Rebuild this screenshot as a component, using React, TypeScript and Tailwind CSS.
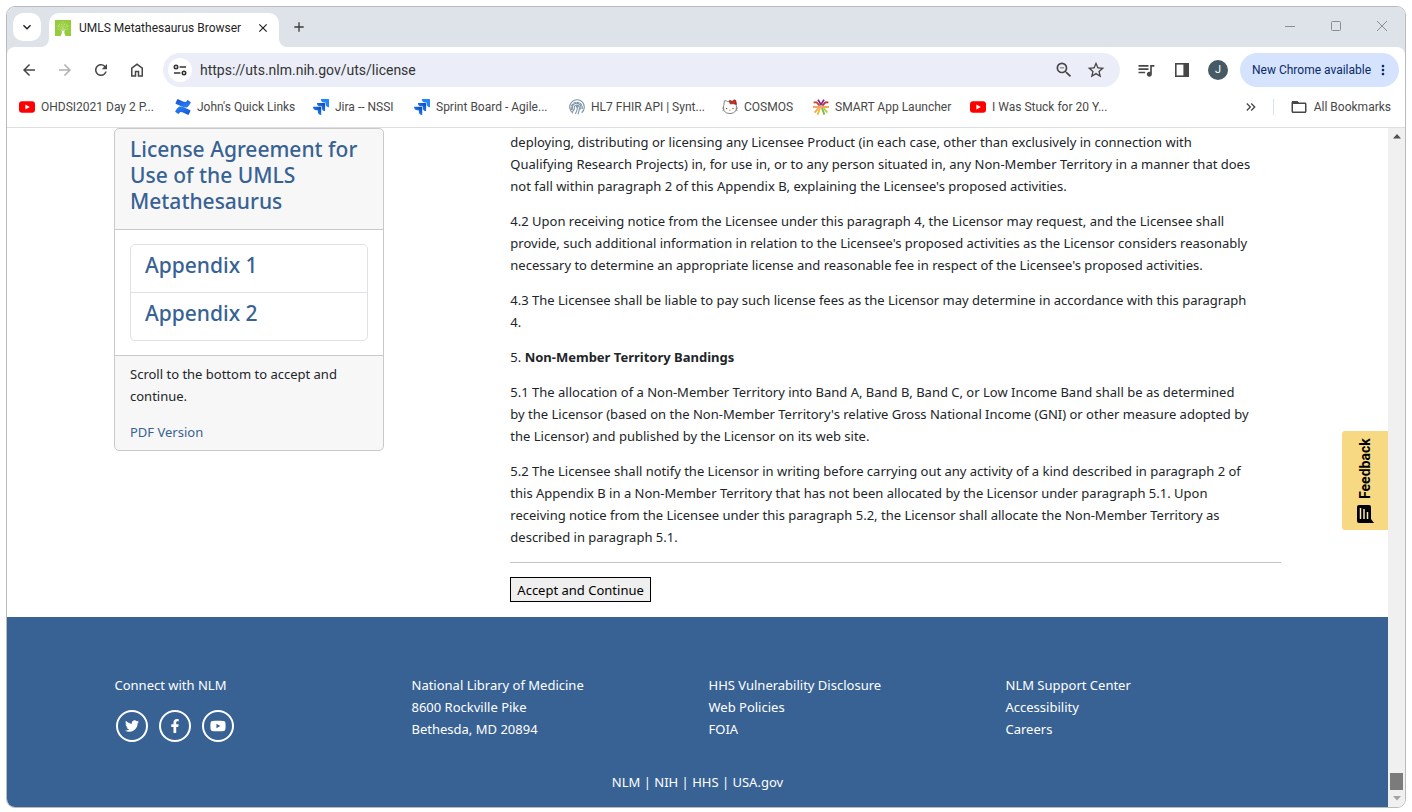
import React from "react";
import {
  MdArrowBack,
  MdArrowForward,
  MdRefresh,
  MdZoomOut,
  MdStarOutline,
  MdQueueMusic,
  MdFolderOpen,
  MdMoreVert,
  MdClose,
  MdAdd,
  MdKeyboardArrowDown,
  MdKeyboardDoubleArrowRight,
} from "react-icons/md";
import { FaTwitter, FaFacebookF, FaYoutube } from "react-icons/fa";

function YouTubeMark() {
  return (
    <svg viewBox="0 0 16 16" className="size-4" aria-hidden="true">
      <rect x="0" y="2.3" width="16" height="11.4" rx="3" fill="#ff0000" />
      <path d="M6.4 5.4 L10.8 8 L6.4 10.6 Z" fill="#fff" />
    </svg>
  );
}

function ConfluenceMark() {
  return (
    <svg viewBox="0 0 16 16" className="size-4" aria-hidden="true">
      <defs>
        <linearGradient id="cf-a" x1="1" y1="1" x2="0.2" y2="0">
          <stop offset="0" stopColor="#1a50c8" />
          <stop offset="1" stopColor="#2684ff" />
        </linearGradient>
        <linearGradient id="cf-b" x1="0" y1="0" x2="0.8" y2="1">
          <stop offset="0" stopColor="#1a50c8" />
          <stop offset="1" stopColor="#2684ff" />
        </linearGradient>
      </defs>
      <path d="M0.4 12 L2 9.5 C3.9 6.7 6.4 7 10.3 8.9 L15 11.1 C15.5 11.3 15.6 11.6 15.4 12 L13.8 15.4 C13.6 15.8 13.2 15.9 12.8 15.7 L8.6 13.8 C6 12.6 4.9 12.6 3.9 14.6 C3.6 15 3.3 15 3 14.8 L0.5 13 C0.1 12.7 0.1 12.4 0.4 12 Z" fill="url(#cf-a)" />
      <path d="M15.6 4 L14 6.5 C12.1 9.3 9.6 9 5.7 7.1 L1 4.9 C0.5 4.7 0.4 4.4 0.6 4 L2.2 0.6 C2.4 0.2 2.8 0.1 3.2 0.3 L7.4 2.2 C10 3.4 11.1 3.4 12.1 1.4 C12.4 1 12.7 1 13 1.2 L15.5 3 C15.9 3.3 15.9 3.6 15.6 4 Z" fill="url(#cf-b)" />
    </svg>
  );
}

function JiraMark() {
  return (
    <svg viewBox="0 0 16 16" className="size-4" aria-hidden="true">
      <defs>
        <linearGradient id="jr-a" x1="1" y1="0" x2="0.3" y2="0.8">
          <stop offset="0.2" stopColor="#0f4fc0" />
          <stop offset="1" stopColor="#2684ff" />
        </linearGradient>
      </defs>
      <path d="M7.8 0 H15.4 A0.6 0.6 0 0 1 16 0.6 V8.2 A3.5 3.5 0 0 1 12.6 4.8 V3.4 H11.2 A3.5 3.5 0 0 1 7.8 0 Z" fill="#2684ff" />
      <path d="M3.9 3.9 H11.5 A0.6 0.6 0 0 1 12.1 4.5 V12.1 A3.5 3.5 0 0 1 8.7 8.7 V7.3 H7.3 A3.5 3.5 0 0 1 3.9 3.9 Z" fill="url(#jr-a)" />
      <path d="M0 7.8 H7.6 A0.6 0.6 0 0 1 8.2 8.4 V16 A3.5 3.5 0 0 1 4.8 12.6 V11.2 H3.4 A3.5 3.5 0 0 1 0 7.8 Z" fill="url(#jr-a)" />
    </svg>
  );
}

function FhirMark() {
  return (
    <svg viewBox="0 0 16 16" className="size-4" fill="none" stroke="#7d93a6" strokeWidth="1.1" aria-hidden="true">
      <path d="M4 14.2 A7.3 7.3 0 1 1 12.6 13.8" />
      <path d="M2.6 11 A5.6 5.6 0 1 1 13.2 10.2" strokeDasharray="3 0.6" />
      <path d="M4.4 11.2 A4.2 4.2 0 1 1 11.4 10.4" />
      <path d="M5.8 10.4 A2.6 2.6 0 1 1 10.4 9 M8.4 7.6 Q8.6 11 6.4 15 M10.4 9 Q10.2 12 9 15.4 M3 12.6 Q4.6 12 5.2 10.6" />
      <circle cx="8.2" cy="7.4" r="1.2" fill="#7d93a6" stroke="none" />
    </svg>
  );
}

function KittyMark() {
  return (
    <svg viewBox="0 0 16 16" className="size-4" aria-hidden="true">
      <path d="M2.4 1.8 Q4 1.2 5.4 2.6 Q8 1.9 10.6 2.8 L13.8 2.4 L14.2 6.2 Q15.4 9 14 11.6 Q11.8 14.6 8 14.6 Q3.8 14.6 1.8 11.6 Q0.8 9 1.8 6.4 Z" fill="#fff" stroke="#777" strokeWidth="0.9" />
      <path d="M7.4 1.6 Q9 1 10 2.6 Q12 0 13.6 1.2 L14.4 5.4 L11.4 4.8 L8 4.8 Z" fill="#d92b20" stroke="#5a2420" strokeWidth="0.6" />
      <circle cx="4.6" cy="9.6" r="0.7" fill="#333" />
      <circle cx="11" cy="9.6" r="0.7" fill="#333" />
      <ellipse cx="7.8" cy="11.2" rx="0.9" ry="0.6" fill="#d8b050" />
      <path d="M0 9 H2.4 M0.4 11.6 L2.6 11 M13.4 9 H16 M13.2 11 L15.6 11.6" stroke="#777" strokeWidth="0.6" />
    </svg>
  );
}

function SmartMark() {
  return (
    <svg viewBox="0 0 16 16" className="size-4" fill="none" strokeWidth="1.8" aria-hidden="true">
      <path d="M5 0.6 L8 5.6 L11 0.6" stroke="#7b2d83" />
      <path d="M0.6 3.4 H3.6 L6.6 6.6" stroke="#d0402a" />
      <path d="M15.4 3.4 H12.4 L9.4 6.6" stroke="#c0283c" />
      <path d="M0 8 H16" stroke="#f08a3c" strokeWidth="1.6" />
      <path d="M7 9 L4.6 15.6" stroke="#f5b921" />
      <path d="M5.4 9.2 L1.6 13.6" stroke="#f5a85a" />
      <path d="M9 9 L11.4 15.6" stroke="#7ab648" />
      <path d="M10.6 9.2 L14.4 13.6" stroke="#b4cf3c" />
    </svg>
  );
}

function TreeMark() {
  return (
    <svg viewBox="0 0 16 16" className="size-4" aria-hidden="true">
      <rect width="16" height="16" fill="#94cc3c" />
      <path d="M5.6 16 Q7.6 12.4 6.4 10 L8 10.8 L9.6 10 Q8.6 12.4 10.6 16 Z" fill="#fff" />
      <g stroke="#d3ea9c" strokeWidth="0.7" fill="none">
        <path d="M6.8 10 L2 8.4 M7 9.6 L3 5 M7.6 9.4 L6 2.4 M8.4 9.4 L10 2.4 M9 9.6 L13 5 M9.2 10 L14 8.4" strokeDasharray="1.6 0.7" />
        <path d="M4 7 L1.6 6 M5 6.4 L4 3 M11 6.4 L12 3 M12 7 L14.4 6 M8 8 V1.6" strokeDasharray="1 0.7" />
      </g>
    </svg>
  );
}

const bookmarks = [
  { label: "OHDSI2021 Day 2 P...", icon: <YouTubeMark />, width: "w-[156px]" },
  { label: "John's Quick Links", icon: <ConfluenceMark />, width: "w-[138px]" },
  { label: "Jira -- NSSI", icon: <JiraMark />, width: "w-[101px]" },
  { label: "Sprint Board - Agile...", icon: <JiraMark />, width: "w-[155px]" },
  { label: "HL7 FHIR API | Synt...", icon: <FhirMark />, width: "w-[153px]" },
  { label: "COSMOS", icon: <KittyMark />, width: "w-[91px]" },
  { label: "SMART App Launcher", icon: <SmartMark />, width: "w-[157px]" },
  { label: "I Was Stuck for 20 Y...", icon: <YouTubeMark />, width: "w-[156px]" },
];

const paragraphs: { lines: React.ReactNode[] }[] = [
  {
    lines: [
      "deploying, distributing or licensing any Licensee Product (in each case, other than exclusively in connection with",
      "Qualifying Research Projects) in, for use in, or to any person situated in, any Non-Member Territory in a manner that does",
      "not fall within paragraph 2 of this Appendix B, explaining the Licensee's proposed activities.",
    ],
  },
  {
    lines: [
      "4.2 Upon receiving notice from the Licensee under this paragraph 4, the Licensor may request, and the Licensee shall",
      "provide, such additional information in relation to the Licensee's proposed activities as the Licensor considers reasonably",
      "necessary to determine an appropriate license and reasonable fee in respect of the Licensee's proposed activities.",
    ],
  },
  {
    lines: [
      "4.3 The Licensee shall be liable to pay such license fees as the Licensor may determine in accordance with this paragraph",
      "4.",
    ],
  },
  { lines: [<>5. <strong className="font-bold">Non-Member Territory Bandings</strong></>] },
  {
    lines: [
      "5.1 The allocation of a Non-Member Territory into Band A, Band B, Band C, or Low Income Band shall be as determined",
      "by the Licensor (based on the Non-Member Territory's relative Gross National Income (GNI) or other measure adopted by",
      "the Licensor) and published by the Licensor on its web site.",
    ],
  },
  {
    lines: [
      "5.2 The Licensee shall notify the Licensor in writing before carrying out any activity of a kind described in paragraph 2 of",
      "this Appendix B in a Non-Member Territory that has not been allocated by the Licensor under paragraph 5.1. Upon",
      "receiving notice from the Licensee under this paragraph 5.2, the Licensor shall allocate the Non-Member Territory as",
      "described in paragraph 5.1.",
    ],
  },
];

const footerColumns = [
  ["National Library of Medicine", "8600 Rockville Pike", "Bethesda, MD 20894"],
  ["HHS Vulnerability Disclosure", "Web Policies", "FOIA"],
  ["NLM Support Center", "Accessibility", "Careers"],
];

const socials = [
  { label: "Twitter", icon: <FaTwitter className="size-[14px]" /> },
  { label: "Facebook", icon: <FaFacebookF className="size-[14px]" /> },
  { label: "YouTube", icon: <FaYoutube className="size-4" /> },
];

function TabStrip() {
  return (
    <div className="flex h-10 shrink-0 items-end bg-[#dee2e9]">
      <div className="flex h-full flex-1 items-end">
        <button aria-label="Search tabs" className="mb-[6px] ml-[6px] flex size-7 items-center justify-center rounded-[10px] bg-white">
          <MdKeyboardArrowDown className="size-4 text-[#1f1f1f]" />
        </button>
        <svg viewBox="0 0 8 8" className="size-2 shrink-0" aria-hidden="true">
          <path d="M8 0 V8 H0 A8 8 0 0 0 8 0 Z" fill="#fff" />
        </svg>
        <div className="flex h-[34px] w-[230px] items-center rounded-t-[10px] bg-white pb-[5px] pl-[6px] pr-2">
          <TreeMark />
          <span className="ml-2 flex-1 whitespace-nowrap text-xs text-[#1f1f1f]">UMLS Metathesaurus Browser</span>
          <button aria-label="Close tab" className="flex size-4 items-center justify-center">
            <MdClose className="size-[14px] text-[#1f1f1f]" />
          </button>
        </div>
        <svg viewBox="0 0 8 8" className="size-2 shrink-0" aria-hidden="true">
          <path d="M0 0 V8 H8 A8 8 0 0 1 0 0 Z" fill="#fff" />
        </svg>
        <button aria-label="New tab" className="mb-[11px] ml-[3px] flex size-[18px] items-center justify-center">
          <MdAdd className="size-4 text-[#3c3c3c]" />
        </button>
      </div>
      <div className="flex h-full items-center gap-9 pb-[2px] pr-[18px] text-[#8a8d93]">
        <button aria-label="Minimize">
          <svg viewBox="0 0 10 10" className="size-[10px]" stroke="currentColor" aria-hidden="true"><path d="M0 5.5 H10" /></svg>
        </button>
        <button aria-label="Maximize">
          <svg viewBox="0 0 10 10" className="size-[10px]" stroke="currentColor" fill="none" aria-hidden="true"><rect x="0.5" y="0.5" width="9" height="9" rx="1" /></svg>
        </button>
        <button aria-label="Close">
          <svg viewBox="0 0 10 10" className="size-[10px]" stroke="currentColor" aria-hidden="true"><path d="M0 0 L10 10 M10 0 L0 10" /></svg>
        </button>
      </div>
    </div>
  );
}

function Toolbar() {
  return (
    <div className="bg-[#dee2e9]">
      <div className="flex h-[46px] items-center rounded-t-lg bg-white pl-[13px] pr-[6px] text-[#474747]">
        <div className="flex gap-[18px]">
          <button aria-label="Back"><MdArrowBack className="size-[18px]" /></button>
          <button aria-label="Forward"><MdArrowForward className="size-[18px] text-[#b0b0b0]" /></button>
          <button aria-label="Reload"><MdRefresh className="size-[18px]" /></button>
          <button aria-label="Home">
            <svg viewBox="0 0 24 24" className="size-[18px]" fill="currentColor" aria-hidden="true">
              <path d="M6 19h3v-6h6v6h3v-9l-6-4.5L6 10v9Zm-2 2V9l8-6 8 6v12h-7v-6h-2v6H4Z" />
            </svg>
          </button>
        </div>
        <div className="ml-[17px] flex h-[34px] flex-1 items-center rounded-full bg-[#ebeef8] pl-[5px] pr-[14px]">
          <button aria-label="Site information" className="flex size-6 items-center justify-center rounded-full bg-white">
            <svg viewBox="0 0 14 14" className="size-[14px]" fill="none" stroke="#333" strokeWidth="1.6" aria-hidden="true">
              <circle cx="3" cy="4" r="1.7" />
              <path d="M6.6 4 H13 M1 10 H7.4" />
              <circle cx="11" cy="10" r="1.7" />
            </svg>
          </button>
          <input
            aria-label="Address"
            defaultValue="https://uts.nlm.nih.gov/uts/license"
            className="ml-2 min-w-0 flex-1 bg-transparent text-sm text-[#333] outline-none"
          />
          <button aria-label="Zoom"><MdZoomOut className="size-[20px]" /></button>
          <button aria-label="Bookmark this page" className="ml-3"><MdStarOutline className="size-[20px]" /></button>
        </div>
        <button aria-label="Media controls" className="ml-4"><MdQueueMusic className="size-[20px]" /></button>
        <button aria-label="Side panel" className="ml-[19px]">
          <svg viewBox="0 0 14 14" className="size-[14px]" aria-hidden="true">
            <rect x="0.8" y="0.8" width="12.4" height="12.4" fill="none" stroke="currentColor" strokeWidth="1.6" />
            <rect x="8.4" y="1" width="5" height="12" fill="currentColor" />
          </svg>
        </button>
        <button aria-label="Profile" className="ml-[19px] flex size-5 items-center justify-center rounded-full bg-[#455a64] text-[11px] text-white">J</button>
        <button className="ml-3 flex h-[34px] items-center rounded-full bg-[#d5e3fe] pl-3 pr-2 text-xs text-[#0a2a66]">
          <span className="w-[123px] whitespace-nowrap text-left">New Chrome available</span>
          <MdMoreVert className="size-4" />
        </button>
      </div>
    </div>
  );
}

function BookmarksBar() {
  return (
    <div className="flex h-[35px] items-center border-b border-[#dcdee2] bg-white pb-[6px] pl-3 pr-[14px] text-xs text-[#474747]">
      <div className="flex flex-1">
        {bookmarks.map((b) => (
          <a key={b.label} href="#" className={`flex shrink-0 items-center gap-[6px] whitespace-nowrap ${b.width}`}>
            {b.icon}
            {b.label}
          </a>
        ))}
      </div>
      <button aria-label="More bookmarks"><MdKeyboardDoubleArrowRight className="size-4" /></button>
      <div className="ml-[14px] h-4 w-px bg-[#d3e3fd]" />
      <a href="#" className="ml-4 flex items-center gap-[6px] whitespace-nowrap">
        <MdFolderOpen className="size-[18px]" />
        All Bookmarks
      </a>
    </div>
  );
}

function SidebarCard() {
  return (
    <aside className="w-[270px] rounded-[5px] border border-[#c9c9c9] bg-[#f7f7f7]">
      <h2 className="border-b border-[#c9c9c9] px-[15px] pb-[15px] pt-[7px] text-[21px] font-medium leading-[26px]">
        <a href="#" className="text-[#386294]">License Agreement for Use of the UMLS Metathesaurus</a>
      </h2>
      <div className="bg-white px-[15px] py-[14px]">
        <ul className="divide-y divide-[#dfe1e4] rounded-[5px] border border-[#dfe1e4] text-[21px] font-medium leading-[26px] text-[#386294]">
          <li className="px-[14px] pb-[14px] pt-[7px]"><a href="#">Appendix 1</a></li>
          <li className="px-[14px] pb-[14px] pt-[7px]"><a href="#">Appendix 2</a></li>
        </ul>
      </div>
      <div className="border-t border-[#c9c9c9] px-[15px] py-[7px] text-[#212529]">
        <p>Scroll to the bottom to accept and continue.</p>
        <p className="mt-[14px]"><a href="#" className="text-[#386294]">PDF Version</a></p>
      </div>
    </aside>
  );
}

function License() {
  return (
    <main className="col-span-8 col-start-5 px-[11px] pt-[3px] text-[#212529]">
      {paragraphs.map((p, i) => (
        <p key={i} className="mb-[13px]">
          {p.lines.map((line, j) => (
            <span key={j} className="block whitespace-nowrap">{line}</span>
          ))}
        </p>
      ))}
      <hr className="my-[14px] border-[#c4c4c4]" />
      <button className="mb-[15px] block h-[25px] border border-black bg-[#efefef] px-[6px] text-black">Accept and Continue</button>
    </main>
  );
}

function Footer() {
  return (
    <footer className="flex-1 bg-[#386294] pb-3 pt-[57px] text-white">
      <div className="mx-auto grid max-w-[1188px] grid-cols-4">
        <div className="px-[11px]">
          <p>Connect with NLM</p>
          <div className="mt-[14px] flex gap-[11px] pl-px">
            {socials.map((s) => (
              <a key={s.label} href="#" aria-label={s.label} className="flex size-8 items-center justify-center rounded-full border-2 border-white">
                {s.icon}
              </a>
            ))}
          </div>
        </div>
        {footerColumns.map((col) => (
          <ul key={col[0]} className="px-[11px]">
            {col.map((item) => (
              <li key={item}><a href="#">{item}</a></li>
            ))}
          </ul>
        ))}
      </div>
      <p className="mt-[29px] text-center">
        <a href="#">NLM</a> | <a href="#">NIH</a> | <a href="#">HHS</a> | <a href="#">USA.gov</a>
      </p>
    </footer>
  );
}

function Scrollbar() {
  return (
    <div className="flex w-[17px] shrink-0 flex-col items-center bg-[#f0f0f0] py-[6px]">
      <svg viewBox="0 0 8 5" className="h-[5px] w-2" aria-hidden="true"><path d="M4 0 L8 4.5 H0 Z" fill="#505050" /></svg>
      <div className="mt-auto h-[17px] w-[13px] bg-[#7b7b7b]" />
      <svg viewBox="0 0 8 5" className="mt-[6px] h-[5px] w-2" aria-hidden="true"><path d="M0 0 H8 L4 4.5 Z" fill="#a3a3a3" /></svg>
    </div>
  );
}

export default function App() {
  return (
    <div className="flex min-h-screen flex-col bg-white px-[6px] pb-1 pt-[6px] font-['Roboto','Noto_Sans',sans-serif]">
      <div className="flex flex-1 flex-col overflow-hidden rounded-[9px] border border-[#b9bbbf]">
        <TabStrip />
        <Toolbar />
        <BookmarksBar />
        <div className="flex flex-1">
          <div className="relative flex min-w-0 flex-1 flex-col bg-white font-['Noto_Sans','Open_Sans',sans-serif] text-[13px] leading-[22px]">
            <div className="mx-auto grid w-full max-w-[1189px] grid-cols-12">
              <div className="col-span-3 px-[11px]"><SidebarCard /></div>
              <License />
            </div>
            <Footer />
            <button className="absolute right-0 top-[303px] flex h-[99px] w-[46px] rotate-180 items-center justify-center gap-[6px] rounded-r-[3px] bg-[#f7d983] font-['Roboto',sans-serif] text-sm font-bold text-black [writing-mode:vertical-rl]">
              <svg viewBox="0 0 18 18" className="size-[18px] rotate-90" aria-hidden="true">
                <path d="M2 1 H16 Q18 1 18 3 V13 Q18 15 16 15 H4 L0 18 V3 Q0 1 2 1 Z" fill="#000" />
                <path d="M4 4.5 H15 M4 8 H14 M4 11.5 H11" stroke="#f7e9b8" strokeWidth="1.5" />
              </svg>
              Feedback
            </button>
          </div>
          <Scrollbar />
        </div>
      </div>
    </div>
  );
}
